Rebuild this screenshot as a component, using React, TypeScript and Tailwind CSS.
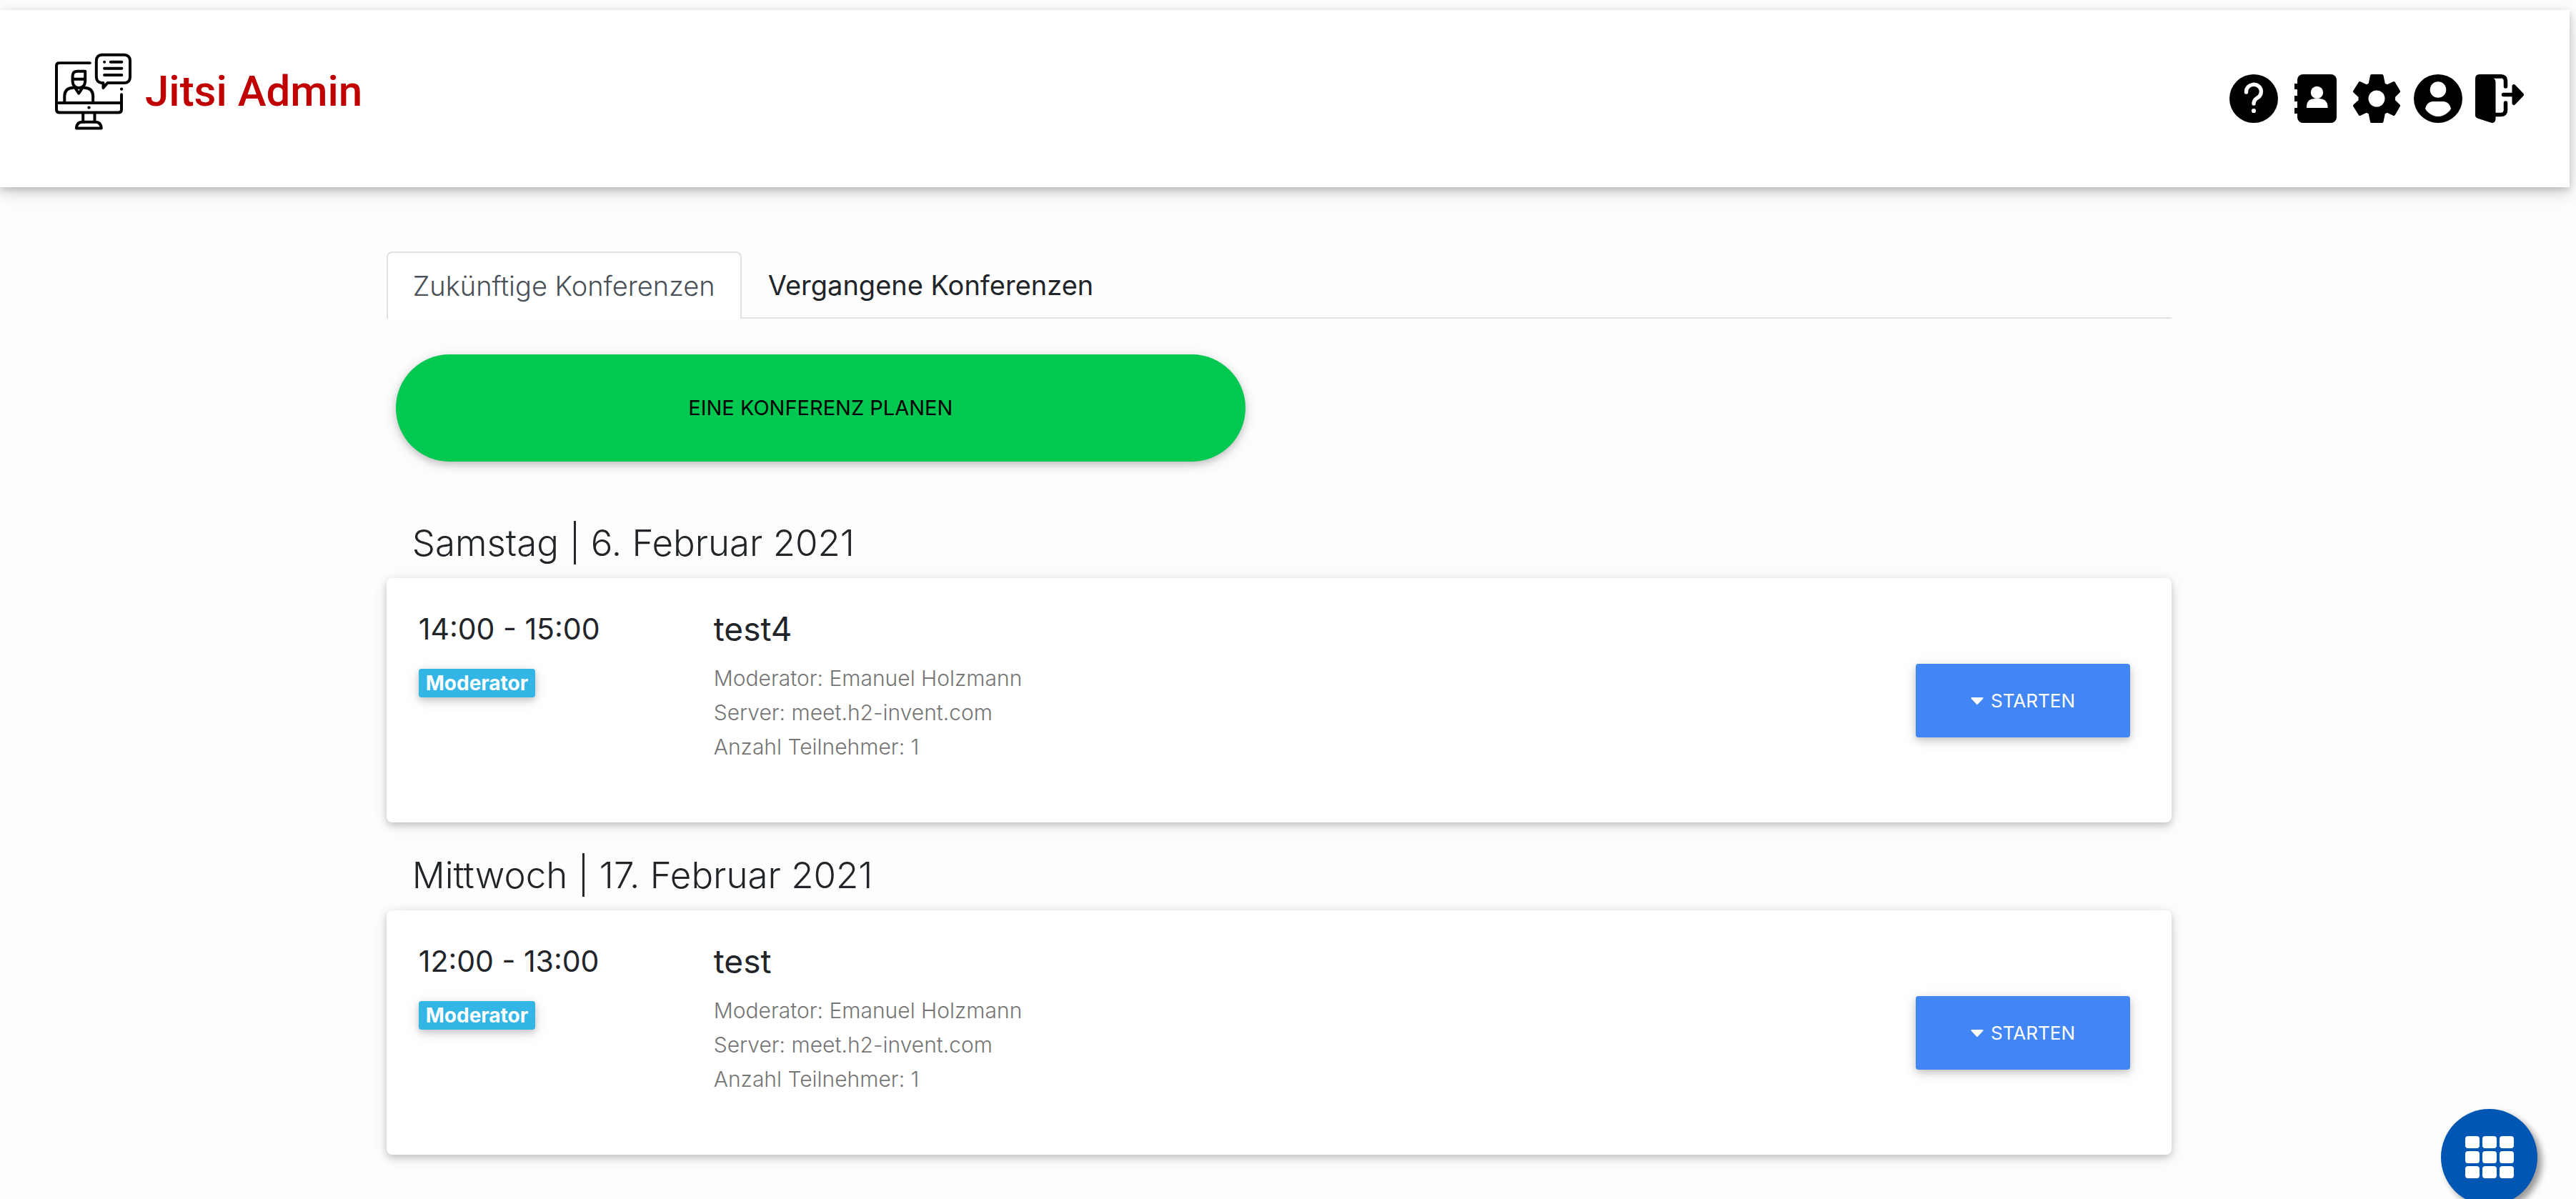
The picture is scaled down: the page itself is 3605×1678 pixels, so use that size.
import React from 'react';

type Conference = { time: string; title: string; moderator: string; server: string; participants: number };
type Day = { date: string; conferences: Conference[] };

const days: Day[] = [
  {
    date: 'Samstag | 6. Februar 2021',
    conferences: [
      { time: '14:00 - 15:00', title: 'test4', moderator: 'Emanuel Holzmann', server: 'meet.h2-invent.com', participants: 1 },
    ],
  },
  {
    date: 'Mittwoch | 17. Februar 2021',
    conferences: [
      { time: '12:00 - 13:00', title: 'test', moderator: 'Emanuel Holzmann', server: 'meet.h2-invent.com', participants: 1 },
    ],
  },
];

function Logo() {
  return (
    <svg viewBox="50 40 322 324" className="h-[108px] w-[107px]" fill="none" stroke="#000" strokeWidth="12" strokeLinecap="round" strokeLinejoin="round" aria-hidden="true">
      <path d="M197 82H68q-12 0-12 12V278q0 13 13 13H317q13 0 13-13V215" />
      <path d="M56 250H330" />
      <circle cx="330" cy="192" r="6.5" fill="#000" stroke="none" />
      <circle cx="193" cy="270" r="6.5" fill="#000" stroke="none" />
      <path d="M168 293V330M217 293V330" />
      <path d="M140 357Q142 331 164 331H221Q243 331 245 357Z" />
      <path d="M90 247V221Q91 187 127 186M173 186Q209 187 210 221V247" />
      <path d="M124 150V136Q125 117 144 117H177V142Q177 150 168 150H124V160Q126 186 150 187Q175 186 177 160V140" />
      <path d="M132 183L150 210L168 183" />
      <path d="M246 48H343Q365 50 366 72V142Q365 165 343 166H271L253 187V166H246Q226 164 224 142V72Q225 50 246 48Z" />
      <path d="M284 78H331M258 105H331M258 133H331" />
      <circle cx="258" cy="78" r="6" fill="#000" stroke="none" />
    </svg>
  );
}

const iconClass = 'h-[68px] w-[68px]';

function HelpIcon() {
  return (
    <svg viewBox="0 0 68 68" className={iconClass} aria-hidden="true">
      <circle cx="34" cy="34" r="34" />
      <path d="M23.5 25V24A10.5 10 0 1 1 39 33Q34 36 34 41" fill="none" stroke="#fff" strokeWidth="5.4" strokeLinecap="round" />
      <circle cx="34" cy="51" r="3.1" fill="#fff" />
    </svg>
  );
}

function AddressBookIcon() {
  return (
    <svg viewBox="0 0 68 68" className={iconClass} aria-hidden="true">
      <rect x="9" y="0" width="55" height="68" rx="8" />
      <path d="M5 13H11V21H5ZM5 30H11V38H5ZM5 47H11V55H5Z" />
      <circle cx="36.5" cy="25.4" r="8.7" fill="#fff" />
      <path d="M22 47V44Q23 34 33 34H40Q50 34 51.5 44V47Z" fill="#fff" />
    </svg>
  );
}

function GearIcon() {
  return (
    <svg viewBox="0 0 68 68" className={iconClass} aria-hidden="true">
      <path
        d="M27 2H41.5L44 14L48.5 16.5L58 12L65 24L58 31V37L65 44L58 56L48.5 51.5L44 54L41.5 66H27L24.5 54L20 51.5L10.5 56L3 44L10.5 37V31L3 24L10.5 12L20 16.5L24.5 14Z"
        stroke="#000"
        strokeWidth="4"
        strokeLinejoin="round"
      />
      <circle cx="34" cy="34" r="11.5" fill="#fff" />
    </svg>
  );
}

function UserIcon() {
  return (
    <svg viewBox="0 0 68 68" className={iconClass} aria-hidden="true">
      <circle cx="34" cy="34" r="34" />
      <circle cx="34" cy="21.5" r="11.3" fill="#fff" />
      <path d="M26 38H42Q50 39 52 48Q51 51 47 54Q41 59 34 59Q27 59 21 54Q17 51 16 48Q18 39 26 38Z" fill="#fff" />
    </svg>
  );
}

function LogoutIcon() {
  return (
    <svg viewBox="0 0 68 68" className={iconClass} aria-hidden="true">
      <path d="M6 0H36V5.5H25Q28.5 6.5 28.5 11V63Q28 68 23 68L3 61.5Q0 60 0 57V6Q0 0 6 0Z" />
      <path d="M26 2.8H36Q42.5 3 42.5 9.5V17M28 56.5H36Q42.5 56 42.5 50V40M39.5 28.5H56" fill="none" stroke="#000" strokeWidth="5.5" strokeLinecap="round" />
      <path d="M54 16.5L65.5 28.5L54 40.5Z" stroke="#000" strokeWidth="5" strokeLinejoin="round" />
    </svg>
  );
}

const tools = [
  { label: 'Hilfe', Icon: HelpIcon },
  { label: 'Adressbuch', Icon: AddressBookIcon },
  { label: 'Einstellungen', Icon: GearIcon },
  { label: 'Profil', Icon: UserIcon },
  { label: 'Abmelden', Icon: LogoutIcon },
];

function ConferenceCard({ conference }: { conference: Conference }) {
  return (
    <article className="flex items-start rounded-[8px] bg-white pt-[43px] pr-[58px] pb-[82px] pl-[45px] shadow-[0_4px_10px_rgba(0,0,0,0.16),0_4px_20px_rgba(0,0,0,0.12)]">
      <div className="w-[413px] shrink-0">
        <p className="text-[41px] leading-[56px]">{conference.time}</p>
        <span className="mt-7 block w-fit rounded-[4px] bg-[#33b5e5] px-[10px] text-[28px] leading-[40px] font-bold text-white shadow-[0_4px_10px_rgba(0,0,0,0.16),0_4px_20px_rgba(0,0,0,0.12)]">
          Moderator
        </span>
      </div>
      <div className="grow">
        <h3 className="text-[46px] leading-[56px]">{conference.title}</h3>
        <div className="mt-[17px] text-[30px] leading-[48px] font-light text-[#757575]">
          <p>Moderator: {conference.moderator}</p>
          <p>Server: {conference.server}</p>
          <p>Anzahl Teilnehmer: {conference.participants}</p>
        </div>
      </div>
      <button
        type="button"
        className="mt-[77px] flex h-[103px] w-[300px] items-center justify-center gap-[10px] rounded-[4px] bg-[#4285f4] text-[26px] text-white shadow-[0_4px_10px_rgba(0,0,0,0.16),0_4px_20px_rgba(0,0,0,0.12)]"
      >
        <svg viewBox="0 0 18 10" className="h-[10px] w-[18px]" fill="#fff" stroke="#fff" strokeWidth="2" strokeLinejoin="round" aria-hidden="true">
          <path d="M1.5 1H16.5L9 9Z" />
        </svg>
        STARTEN
      </button>
    </article>
  );
}

export default function App() {
  return (
    <div className="min-h-screen overflow-hidden bg-[#fdfdfd] font-['Inter',sans-serif] text-[#212529]">
      <header className="mt-[14px] mr-[9px] flex items-center justify-between bg-white py-[60px] pr-16 pl-[77px] shadow-[0_4px_10px_rgba(0,0,0,0.18),0_8px_24px_rgba(0,0,0,0.14)]">
        <a href="#" className="flex items-center gap-[19px] pb-5">
          <Logo />
          <span className="font-['Roboto',sans-serif] text-[60px] leading-[72px] font-medium text-[#c00000]">Jitsi Admin</span>
        </a>
        <nav className="flex gap-[18px]" aria-label="Werkzeuge">
          {tools.map(({ label, Icon }) => (
            <a key={label} href="#" aria-label={label}>
              <Icon />
            </a>
          ))}
        </nav>
      </header>

      <main className="pt-[90px] pr-[15.7%] pb-[62px] pl-[15%]">
        <div role="tablist" className="flex border-b-2 border-[#dee2e6] text-[38px] leading-[56px]">
          <button type="button" role="tab" aria-selected="true" className="-mb-[2px] rounded-t-[8px] border-2 border-b-0 border-[#dee2e6] bg-white px-[35px] py-[18px] font-light text-[#495057]">
            Zukünftige Konferenzen
          </button>
          <button type="button" role="tab" aria-selected="false" className="-mb-[2px] px-[37px] py-[18px]">
            Vergangene Konferenzen
          </button>
        </div>

        <button
          type="button"
          className="mt-[50px] ml-[13px] block h-[150px] w-[47.6%] rounded-full bg-[#00c851] text-[29px] text-black shadow-[0_4px_10px_rgba(0,0,0,0.16),0_4px_20px_rgba(0,0,0,0.12)]"
        >
          EINE KONFERENZ PLANEN
        </button>

        <div className="mt-[84px] flex flex-col gap-[44px]">
          {days.map((day) => (
            <section key={day.date}>
              <h2 className="mb-[19px] ml-9 text-[51px] leading-[60px] font-light">{day.date}</h2>
              {day.conferences.map((conference) => (
                <ConferenceCard key={conference.title} conference={conference} />
              ))}
            </section>
          ))}
        </div>
      </main>

      <button
        type="button"
        aria-label="Menü"
        className="fixed right-[54px] -bottom-[9px] flex h-[135px] w-[135px] items-center justify-center rounded-full bg-[#0056b3] shadow-[6px_6px_10px_rgba(0,0,0,0.4)]"
      >
        <span className="grid grid-cols-3 gap-1">
          {[1, 2, 3, 4, 5, 6, 7, 8, 9].map((n) => (
            <span key={n} className="h-[17px] w-5 rounded-[4px] bg-white" />
          ))}
        </span>
      </button>
    </div>
  );
}
